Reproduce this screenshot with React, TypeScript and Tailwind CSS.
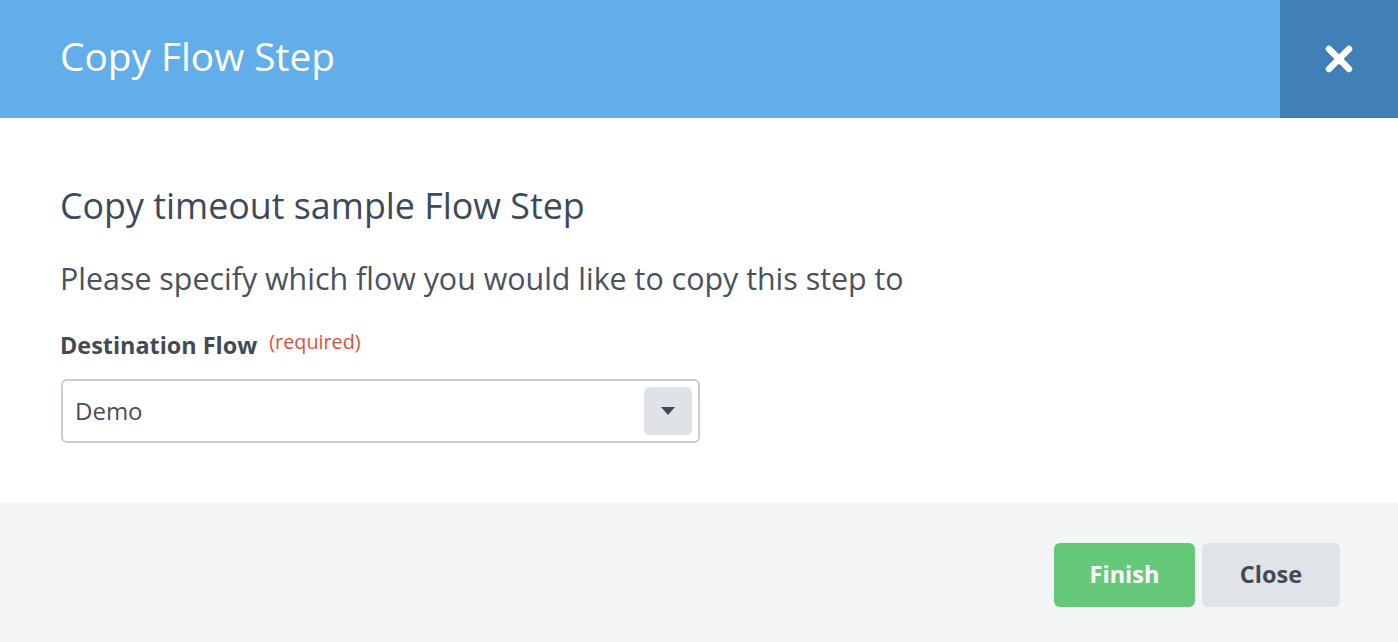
export default function App() {
  return (
    <div className="w-[1398px] h-[642px] flex flex-col bg-white overflow-hidden" style={{ fontFamily: "'Open Sans', Lato, sans-serif" }}>
      <div className="h-[118px] flex bg-[#62aeea]">
        <div className="flex-1 flex items-center pl-[60px] pb-[6px]">
          <span className="text-white text-[38.8px] leading-none">Copy Flow Step</span>
        </div>
        <div className="w-[118px] bg-[#4080b7] flex items-center justify-center">
          <svg width="30" height="30" viewBox="0 0 30 30">
            <path d="M5 5 L25 25 M25 5 L5 25" stroke="white" strokeWidth="6.5" strokeLinecap="round" />
          </svg>
        </div>
      </div>
      <div className="h-[385px] flex flex-col pl-[60px] pt-[67px]">
        <h2 className="text-[35.8px] leading-[40px] text-[#3d4a5c]">Copy timeout sample Flow Step</h2>
        <p className="mt-[39px] text-[30.4px] leading-[30px] text-[#4a5260]">Please specify which flow you would like to copy this step to</p>
        <div className="mt-[38px] flex items-start">
          <span className="text-[23.4px] leading-[26px] font-bold text-[#434a54]">Destination Flow</span>
          <span className="ml-[12px] text-[19.8px] leading-[20px] text-[#e0503a]">(required)</span>
        </div>
        <div className="mt-[21px] ml-[1px] w-[639px] h-[64px] border-2 border-[#c9cdd3] rounded-[6px] flex items-center justify-between pl-[12px] pr-[6px]">
          <span className="text-[24px] text-[#4a4f57]">Demo</span>
          <div className="w-[48px] h-[48px] bg-[#dfe2e6] rounded-[6px] flex items-center justify-center">
            <svg width="16" height="10" viewBox="0 0 16 10">
              <path d="M1 1 L15 1 L8 9 Z" fill="#434a54" />
            </svg>
          </div>
        </div>
      </div>
      <div className="flex-1 bg-[#f4f5f7] flex justify-end items-start pt-[40px] pr-[58px] gap-[7px]">
        <button className="w-[141px] h-[64px] rounded-[6px] bg-[#66c97a] text-white text-[23.5px] font-bold">Finish</button>
        <button className="w-[138px] h-[64px] rounded-[6px] bg-[#e0e3e7] text-[#434a54] text-[23.5px] font-bold">Close</button>
      </div>
    </div>
  );
}
